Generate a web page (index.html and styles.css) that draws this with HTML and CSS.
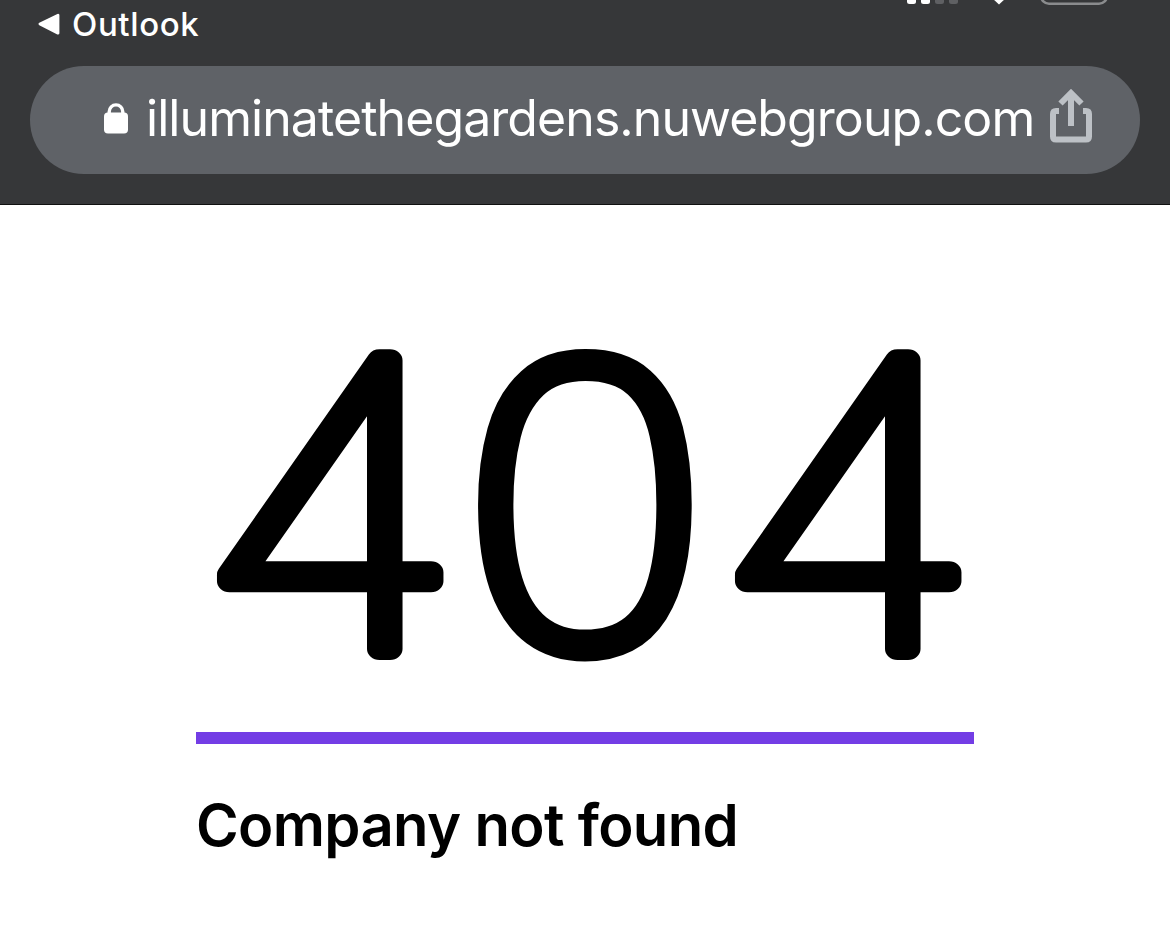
FILE: index.html
```html
<!DOCTYPE html>
<html lang="en">
<head>
    <meta charset="UTF-8">
    <meta name="viewport" content="width=device-width, initial-scale=1.0">
    <title>404 - Company not found</title>
    <link rel="stylesheet" href="styles.css">
</head>
<body>
    <header>
        <div class="status-bar">
            <a class="back-link" href="#">
                <svg class="back-arrow" width="22" height="22" viewBox="0 0 22 22">
                    <path d="M1.9 11 L20 2.2 V20.2 Z" fill="#fff" stroke="#fff" stroke-width="2.8" stroke-linejoin="round"/>
                </svg>
                <span>Outlook</span>
            </a>
            <svg class="status-icons" width="204" height="6" viewBox="0 0 204 6">
                <g fill="#fff">
                    <rect x="0" y="-10" width="9" height="14" rx="2.5"/>
                    <rect x="14" y="-10" width="9" height="14" rx="2.5"/>
                    <path d="M85 -2 H99 L92 4.5 Z"/>
                </g>
                <g fill="#5f6063">
                    <rect x="28" y="-10" width="9" height="14" rx="2.5"/>
                    <rect x="42" y="-10" width="9" height="14" rx="2.5"/>
                </g>
                <rect x="134" y="-26" width="66" height="29.7" rx="8" fill="none" stroke="#8a8b8d" stroke-width="2.6"/>
            </svg>
        </div>
        <div class="address-bar">
            <svg class="lock" width="24" height="31" viewBox="0 0 24 31">
                <rect x="0" y="9.5" width="24" height="21" rx="4" fill="#fff"/>
                <path d="M5.2 12 V8.7 A6.8 6.8 0 0 1 18.8 8.7 V12" fill="none" stroke="#fff" stroke-width="3.4"/>
            </svg>
            <span class="url">illuminatethegardens.nuwebgroup.com</span>
            <svg class="share" width="42" height="54" viewBox="0 0 42 54" fill="none" stroke="#bdc1c6" stroke-width="6">
                <path d="M9 22 H6 Q3 22 3 25 V47.5 Q3 50.5 6 50.5 H36 Q39 50.5 39 47.5 V25 Q39 22 36 22 H33"/>
                <path d="M21 37 V5"/>
                <path d="M10.5 14.5 L21 4 L31.5 14.5"/>
            </svg>
        </div>
    </header>
    <main>
        <svg class="code" width="778" height="340" viewBox="0 0 778 340">
            <text class="four" transform="translate(0 316) scale(1.135 1)">4</text>
            <text class="zero" transform="translate(267.5 313.5) scale(1.08 1)">0</text>
            <text class="four" transform="translate(518 316) scale(1.135 1)">4</text>
        </svg>
        <h1>Company not found</h1>
    </main>
</body>
</html>
```
FILE: styles.css
```css
body {
    font-family: 'Inter', 'Liberation Sans', sans-serif;
    margin: 0;
    padding: 0;
    background-color: #fff;
    color: #000;
}
header {
    box-sizing: border-box;
    height: 205px;
    background-color: #363739;
    border-bottom: 1px solid #111;
    color: white;
}
.status-bar {
    display: flex;
    justify-content: space-between;
    align-items: flex-start;
    height: 66px;
    padding: 0 59px 0 38px;
}
.back-link {
    display: flex;
    align-items: center;
    gap: 12px;
    height: 48px;
    color: white;
    font-size: 33px;
    font-weight: 450;
    letter-spacing: 0.6px;
    text-decoration: none;
}
.status-icons {
    display: block;
}
.address-bar {
    display: flex;
    align-items: center;
    box-sizing: border-box;
    height: 108px;
    margin: 0 30px;
    padding: 0 48px 0 74px;
    border-radius: 54px;
    background-color: #5f6267;
}
.lock {
    flex: none;
    margin: -4px 18px 0 0;
}
.url {
    flex: 1;
    min-width: 0;
    margin-top: -4px;
    white-space: nowrap;
    font-size: 50px;
    line-height: 60px;
    letter-spacing: -0.93px;
}
.share {
    flex: none;
    margin-top: -8px;
}
main {
    width: 778px;
    margin: 0 auto;
    padding: 128px 0 0 0;
}
.code {
    display: block;
    overflow: visible;
    padding-bottom: 59px;
    border-bottom: 12px solid #733de5;
}
/* thin digits with a round outline give the soft ends */
.code text {
    font-weight: 100;
    fill: #000;
    stroke: #000;
    stroke-width: 22px;
    stroke-linejoin: round;
}
.code .four {
    font-size: 397px;
}
.code .zero {
    font-family: 'Noto Sans', sans-serif;
    font-size: 395px;
}
h1 {
    margin: 43px 0 0 0;
    font-size: 58px;
    font-weight: 600;
    line-height: 76px;
    letter-spacing: -0.65px;
    white-space: nowrap;
}
```
